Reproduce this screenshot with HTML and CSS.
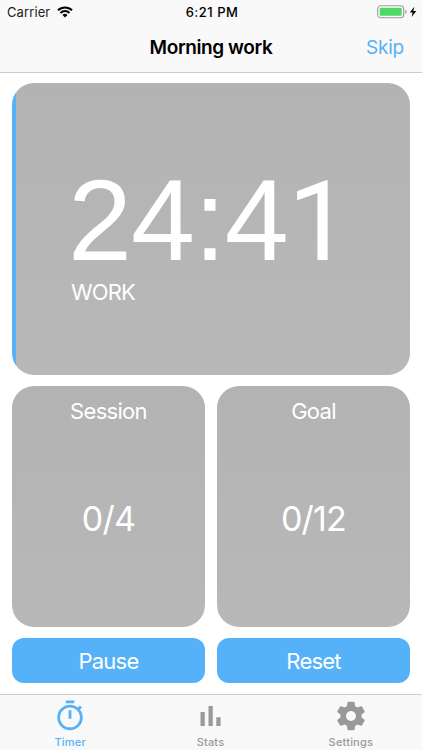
FILE: index.html
```html
<!DOCTYPE html>
<html lang="en">
<head>
  <meta charset="UTF-8">
  <title>Morning work</title>
  <link rel="stylesheet" href="styles.css">
</head>
<body>
  <header class="header">
    <div class="status-bar">
      <div class="carrier">
        <span class="carrier-name">Carrier</span>
        <svg class="wifi" width="16" height="12" viewBox="0 0 16 12">
          <path d="M1 4.3a10 10 0 0 1 14 0M3.5 6.9a6.4 6.4 0 0 1 9 0" fill="none" stroke="#000" stroke-width="2.1"/>
          <path d="M8 11.4 5.5 8.9a3.6 3.6 0 0 1 5 0z" fill="#000"/>
        </svg>
      </div>
      <span class="clock">6:21 PM</span>
      <div class="battery">
        <svg width="40" height="14" viewBox="0 0 40 14">
          <rect x=".7" y=".8" width="26" height="12" rx="3.2" fill="#fff" stroke="#999" stroke-width="1.1"/>
          <rect x="2.7" y="2.8" width="22" height="8" rx="1" fill="#4cd964"/>
          <path d="M28.3 4.7q1.5.6 1.5 2.1t-1.5 2.1z" fill="#999"/>
          <path d="M37.3 1.8 32.8 7.4h2.9l-1.2 4.6 4.8-6h-3z" fill="#000"/>
        </svg>
      </div>
    </div>
    <div class="nav-bar">
      <h1 class="title">Morning work</h1>
      <a class="skip">Skip</a>
    </div>
  </header>

  <main class="content">
    <section class="card timer-card">
      <div class="time">24:4<span class="one">1</span></div>
      <div class="phase">WORK</div>
    </section>
    <div class="row counters">
      <section class="card counter">
        <h2 class="counter-name">Session</h2>
        <div class="count">0/4</div>
      </section>
      <section class="card counter">
        <h2 class="counter-name">Goal</h2>
        <div class="count">0/12</div>
      </section>
    </div>
    <div class="row">
      <button class="btn">Pause</button>
      <button class="btn">Reset</button>
    </div>
  </main>

  <nav class="tab-bar">
    <a class="tab active">
      <svg width="34" height="34" viewBox="0 0 24 24"><path d="M15 1H9v2h6V1zm-4 13h2V8h-2v6zm8.03-6.61l1.42-1.42c-.43-.51-.9-.99-1.41-1.41l-1.42 1.42C16.07 4.74 14.12 4 12 4c-4.97 0-9 4.03-9 9s4.02 9 9 9 9-4.03 9-9c0-2.12-.74-4.07-1.97-5.61zM12 20c-3.87 0-7-3.13-7-7s3.13-7 7-7 7 3.13 7 7-3.13 7-7 7z"/></svg>
      <span class="tab-label">Timer</span>
    </a>
    <a class="tab">
      <svg width="34" height="34" viewBox="0 0 34 34"><path d="M7.5 13h4.3v14H7.5zM15.5 7h4.3v20h-4.3zM23.3 18.2h4.3V27h-4.3z"/></svg>
      <span class="tab-label">Stats</span>
    </a>
    <a class="tab">
      <svg width="34" height="34" viewBox="0 0 24 24"><path d="M19.43 12.98c.04-.32.07-.64.07-.98s-.03-.66-.07-.98l2.11-1.65c.19-.15.24-.42.12-.64l-2-3.46c-.12-.22-.39-.3-.61-.22l-2.49 1c-.52-.4-1.08-.73-1.69-.98l-.38-2.65C14.46 2.18 14.25 2 14 2h-4c-.25 0-.46.18-.49.42l-.38 2.65c-.61.25-1.17.59-1.69.98l-2.49-1c-.23-.09-.49 0-.61.22l-2 3.46c-.13.22-.07.49.12.64l2.11 1.65c-.04.32-.07.65-.07.98s.03.66.07.98l-2.11 1.65c-.19.15-.24.42-.12.64l2 3.46c.12.22.39.3.61.22l2.49-1c.52.4 1.08.73 1.69.98l.38 2.65c.03.24.24.42.49.42h4c.25 0 .46-.18.49-.42l.38-2.65c.61-.25 1.17-.59 1.69-.98l2.49 1c.23.09.49 0 .61-.22l2-3.46c.12-.22.07-.49-.12-.64l-2.11-1.65zM12 15.5c-1.93 0-3.5-1.57-3.5-3.5s1.57-3.5 3.5-3.5 3.5 1.57 3.5 3.5-1.57 3.5-3.5 3.5z"/></svg>
      <span class="tab-label">Settings</span>
    </a>
  </nav>
</body>
</html>
```

FILE: styles.css
```css
* {
  margin: 0;
  padding: 0;
  box-sizing: border-box;
}

body {
  display: flex;
  flex-direction: column;
  height: 750px;
  overflow: hidden;
  background: #fff;
  font-family: Inter, "Liberation Sans", sans-serif;
}

.header {
  height: 73px;
  background: #f9f9f9;
  border-bottom: 1px solid #ccc;
}

.status-bar {
  display: grid;
  grid-template-columns: 1fr auto 1fr;
  align-items: center;
  height: 24px;
  padding: 0 5px 0 7px;
}

.carrier {
  display: flex;
  align-items: center;
  gap: 7px;
}

.carrier-name {
  font-size: 13px;
  line-height: 16px;
  letter-spacing: 0.1px;
  color: #222;
}

.clock {
  font-size: 13px;
  font-weight: 500;
  line-height: 16px;
  letter-spacing: 0.5px;
}

.battery {
  display: flex;
  justify-content: flex-end;
}

.nav-bar {
  display: grid;
  grid-template-columns: 1fr auto 1fr;
  align-items: center;
  height: 47px;
  padding: 0 18px;
}

.title {
  grid-column: 2;
  font-size: 19px;
  font-weight: 600;
  letter-spacing: -0.4px;
}

.skip {
  justify-self: end;
  font-size: 19px;
  letter-spacing: -0.2px;
  color: #55b2f9;
}

.content {
  display: flex;
  flex-direction: column;
  gap: 11px;
  height: 621px;
  padding: 10px 12px 11px;
}

.card {
  border-radius: 22px;
  background: linear-gradient(#b3b3b3, #b8b8b8);
  color: #fff;
  overflow: hidden;
}

/* the blue strip on the left is the elapsed time */
.timer-card {
  height: 292px;
  padding: 83px 0 0 55px;
  background: linear-gradient(90deg, #55b2f9 4px, transparent 4px), linear-gradient(#b3b3b3, #b8b8b8);
}

.time {
  height: 112px;
  margin-left: 1px;
  font-family: "Liberation Sans", Arial, sans-serif;
  font-size: 115px;
  line-height: 108px;
  letter-spacing: -1px;
}

.one {
  font-family: Roboto, sans-serif;
  font-size: 112px;
}

.phase {
  margin-left: 4px;
  font-size: 22px;
  line-height: 28px;
  letter-spacing: -0.9px;
}

.row {
  display: flex;
  gap: 12px;
}

.counter {
  display: flex;
  flex-direction: column;
  flex: 1;
  height: 241px;
  padding-top: 11px;
  text-align: center;
}

.counter-name {
  font-size: 22px;
  font-weight: 400;
  line-height: 28px;
  letter-spacing: -0.7px;
}

.count {
  margin-top: 72px;
  font-size: 34px;
  line-height: 44px;
  letter-spacing: -0.8px;
}

.btn {
  flex: 1;
  height: 45px;
  border: none;
  border-radius: 12px;
  background: #55b2f9;
  color: #fff;
  font-family: inherit;
  font-size: 22px;
  letter-spacing: -0.8px;
}

.tab-bar {
  display: flex;
  height: 56px;
  padding: 4px 1px 0 0;
  background: #f9f9f9;
  border-top: 1px solid #ccc;
}

.tab {
  display: flex;
  flex: 1;
  flex-direction: column;
  align-items: center;
  color: #999;
}

.tab svg {
  fill: currentColor;
}

.tab.active {
  color: #55b2f9;
}

.tab-label {
  margin-top: 2px;
  font-size: 11px;
  font-weight: 500;
  line-height: 14px;
  letter-spacing: 0.2px;
}
```
